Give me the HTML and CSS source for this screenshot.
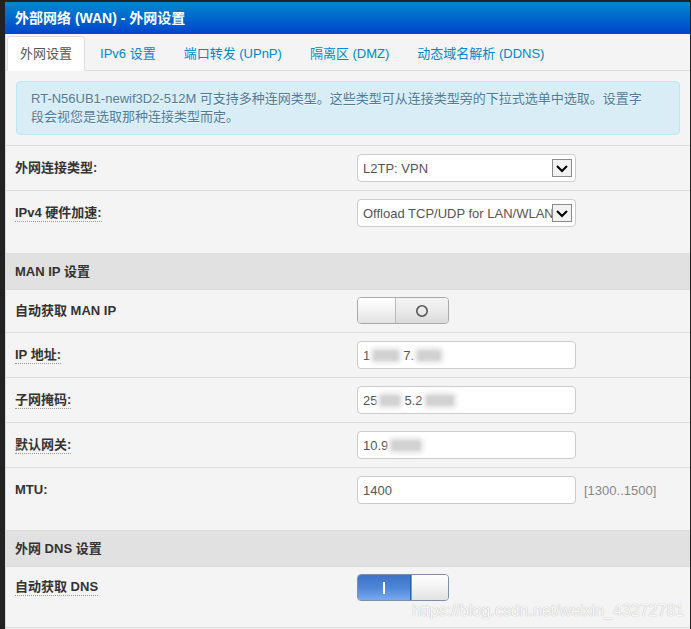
FILE: index.html
```html
<!DOCTYPE html>
<html lang="zh">
<head>
<meta charset="utf-8">
<title>外部网络 (WAN) - 外网设置</title>
<link rel="stylesheet" href="styles.css">
</head>
<body>
<div class="page">
  <div class="title">外部网络 (WAN) - 外网设置</div>
  <div class="content">
    <ul class="tabs">
      <li class="tab active">外网设置</li>
      <li class="tab">IPv6 设置</li>
      <li class="tab">端口转发 (UPnP)</li>
      <li class="tab">隔离区 (DMZ)</li>
      <li class="tab">动态域名解析 (DDNS)</li>
    </ul>

    <div class="alert-wrap">
      <div class="alert">RT-N56UB1-newif3D2-512M 可支持多种连网类型。这些类型可从连接类型旁的下拉式选单中选取。设置字段会视您是选取那种连接类型而定。</div>
    </div>

    <div class="row">
      <div class="label"><span>外网连接类型:</span></div>
      <div class="field">
        <div class="select">
          <span class="select-text">L2TP: VPN</span>
          <svg class="arrow" width="20" height="18" viewBox="0 0 20 18"><rect x="0.5" y="0.5" width="19" height="17" fill="#f2f2f2" stroke="#8a8a8a"/><path d="M5 7 L10 12 L15 7" fill="none" stroke="#000" stroke-width="2"/></svg>
        </div>
      </div>
    </div>

    <div class="row tall">
      <div class="label"><span class="tip">IPv4 硬件加速:</span></div>
      <div class="field">
        <div class="select">
          <span class="select-text">Offload TCP/UDP for LAN/WLAN</span>
          <svg class="arrow" width="20" height="18" viewBox="0 0 20 18"><rect x="0.5" y="0.5" width="19" height="17" fill="#f2f2f2" stroke="#8a8a8a"/><path d="M5 7 L10 12 L15 7" fill="none" stroke="#000" stroke-width="2"/></svg>
        </div>
      </div>
    </div>

    <div class="section">MAN IP 设置</div>

    <div class="row switch-row">
      <div class="label"><span>自动获取 MAN IP</span></div>
      <div class="field">
        <div class="toggle off">
          <span class="knob"></span>
          <span class="toggle-off-label"><svg width="14" height="14" viewBox="0 0 14 14"><circle cx="7" cy="7" r="5.2" fill="none" stroke="#555" stroke-width="1.6"/></svg></span>
        </div>
      </div>
    </div>

    <div class="row">
      <div class="label"><span class="tip">IP 地址:</span></div>
      <div class="field">
        <div class="input"><span>1</span><span class="smudge w26"></span><span>7.</span><span class="smudge w24"></span></div>
      </div>
    </div>

    <div class="row">
      <div class="label"><span class="tip">子网掩码:</span></div>
      <div class="field">
        <div class="input"><span>25</span><span class="smudge w20"></span><span>5.2</span><span class="smudge w28"></span></div>
      </div>
    </div>

    <div class="row">
      <div class="label"><span class="tip">默认网关:</span></div>
      <div class="field">
        <div class="input"><span>10.9</span><span class="smudge w30"></span></div>
      </div>
    </div>

    <div class="row tall">
      <div class="label"><span>MTU:</span></div>
      <div class="field">
        <div class="input">1400</div>
        <span class="hint">[1300..1500]</span>
      </div>
    </div>

    <div class="section">外网 DNS 设置</div>

    <div class="row switch-row tall-switch">
      <div class="label"><span class="tip">自动获取 DNS</span></div>
      <div class="field">
        <div class="toggle on">
          <span class="toggle-on-label"><span class="bar"></span></span>
          <span class="knob"></span>
        </div>
      </div>
    </div>

    <div class="foot"></div>
  </div>
  <div class="watermark">https://blog.csdn.net/weixin_43272781</div>
</div>
</body>
</html>
```

FILE: styles.css
```css
* { box-sizing: border-box; }

html, body {
  margin: 0;
  padding: 0;
}

body {
  background: #222;
  padding: 2px 1px 0 5px;
  font-family: "Liberation Sans", Arial, "Noto Sans CJK SC", sans-serif;
  font-size: 13px;
  color: #333;
  height: 629px;
  overflow: hidden;
}

.page {
  position: relative;
  background: #f4f4f4;
  height: 627px;
}

.title {
  height: 32px;
  line-height: 32px;
  padding-left: 10px;
  color: #fff;
  font-weight: bold;
  font-size: 14px;
  background: linear-gradient(#0088cc, #0044cc);
}

.content {
  border-left: 1px solid #d6d6d6;
  height: 595px;
}

.tabs {
  list-style: none;
  margin: 0;
  padding: 2px 0 0 1px;
  display: flex;
  border-bottom: 1px solid #ddd;
}

.tab {
  height: 35px;
  line-height: 33px;
  padding: 0 12px;
  margin-right: 2px;
  margin-bottom: -1px;
  border: 1px solid transparent;
  border-radius: 4px 4px 0 0;
  color: #0088cc;
  white-space: nowrap;
}

.tab.active {
  background: #fff;
  color: #555;
  border-color: #ddd #ddd transparent;
}

.alert-wrap {
  padding: 10px 10px;
}

.alert {
  background: #d9edf7;
  border: 1px solid #bce8f1;
  border-radius: 4px;
  padding: 8px 30px 8px 14px;
  line-height: 18px;
  color: #4f7c97;
  text-shadow: 0 1px 0 rgba(255, 255, 255, 0.5);
}

.row {
  display: grid;
  grid-template-columns: 351px 1fr;
  padding: 8px 0;
  border-top: 1px solid #ddd;
}

.row.tall {
  padding-bottom: 26px;
}

.switch-row {
  padding-top: 7px;
}

.row.tall-switch {
  padding-bottom: 26px;
}

.label {
  display: flex;
  align-items: center;
  height: 28px;
  padding-left: 9px;
  font-weight: bold;
}

.switch-row .label {
  height: 27px;
}

.label span {
  line-height: 16px;
}

.label .tip {
  border-bottom: 1px dotted #999;
}

.field {
  display: flex;
  align-items: center;
}

.select,
.input {
  width: 219px;
  height: 28px;
  background: #fff;
  border: 1px solid #ccc;
  border-radius: 4px;
  display: flex;
  align-items: center;
  padding-left: 5px;
  color: #555;
  white-space: nowrap;
  overflow: hidden;
}

.select-text {
  flex: 1;
  overflow: hidden;
  white-space: nowrap;
}

.arrow {
  flex: none;
  margin-right: 3px;
  display: block;
}

.hint {
  margin-left: 8px;
  color: #888;
}

.smudge {
  display: inline-block;
  height: 11px;
  background: #d2d2d2;
  border-radius: 3px;
  box-shadow: 0 0 0 4px rgba(240, 240, 240, 0.9);
  filter: blur(1.4px);
  margin: 0 4px 0 3px;
}

.smudge.w20 { width: 20px; }
.smudge.w24 { width: 24px; }
.smudge.w26 { width: 26px; }
.smudge.w28 { width: 28px; }
.smudge.w30 { width: 30px; }

.section {
  background: #e1e1e1;
  border-top: 1px solid #ddd;
  height: 36px;
  line-height: 35px;
  padding-left: 9px;
  font-weight: bold;
}

.toggle {
  width: 92px;
  height: 27px;
  border-radius: 4px;
  display: flex;
  overflow: hidden;
}

.toggle.off {
  border: 1px solid #a9a9a9;
}

.toggle.on {
  border: 1px solid #7e8ea8;
}

.toggle .knob {
  width: 38px;
  background: linear-gradient(#ffffff, #f4f4f4 45%, #e2e2e2);
}

.toggle.off .knob {
  border-right: 1px solid #b9b9b9;
}

.toggle.on .knob {
  border-left: 1px solid #9a9a9a;
  flex: 1;
}

.toggle-off-label {
  flex: 1;
  display: flex;
  align-items: center;
  justify-content: center;
  background: linear-gradient(#f3f3f3, #ebebeb 50%, #dadada);
}

.toggle-off-label svg {
  display: block;
}

.toggle-on-label {
  width: 53px;
  display: flex;
  align-items: center;
  justify-content: center;
  background: linear-gradient(#3b72c7, #4d86d8 50%, #78a9ee);
  border-right: 1px solid #2d5ea8;
}

.toggle-on-label .bar {
  width: 2px;
  height: 12px;
  background: #fff;
}

.foot {
  border-top: 1px solid #ddd;
}

.watermark {
  position: absolute;
  left: 407px;
  top: 600px;
  font-size: 16px;
  line-height: 18px;
  color: #f8f8f8;
  text-shadow: 0 0 1px #bdbdbd, 0 0 1px #cdcdcd;
  white-space: nowrap;
}
```
